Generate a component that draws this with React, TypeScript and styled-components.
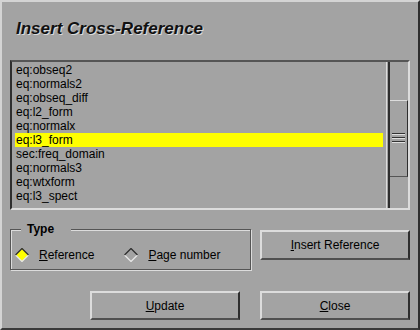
import styled, { createGlobalStyle } from 'styled-components';

const GlobalStyle = createGlobalStyle`
  html, body {
    margin: 0;
    padding: 0;
    background: #a3a3a3;
  }
  body {
    font-family: "Liberation Sans", Arial, sans-serif;
  }
`;

const labels = [
  'eq:obseq2',
  'eq:normals2',
  'eq:obseq_diff',
  'eq:l2_form',
  'eq:normalx',
  'eq:l3_form',
  'sec:freq_domain',
  'eq:normals3',
  'eq:wtxform',
  'eq:l3_spect',
];

const Diamond = ({ checked }: { checked: boolean }) => (
  <svg width="14" height="14" viewBox="0 0 14 14">
    <polygon points="7,0.5 13.5,7 7,13.5 0.5,7" fill={checked ? '#ffff00' : '#a3a3a3'} />
    <polyline points="0.5,7 7,13.5 13.5,7" fill="none" stroke="#e6e6e6" strokeWidth="1.3" />
    <polyline points="0.5,7 7,0.5 13.5,7" fill="none" stroke="#2e2e2e" strokeWidth="1.3" />
  </svg>
);

export default function App() {
  return (
    <>
      <GlobalStyle />
      <Dialog>
        <Header>
          <Title>Insert Cross-Reference</Title>
        </Header>

        <ListFrame>
          <ListArea>
            {labels.map((label, i) => (
              <Row key={label} $selected={i === 5}>
                {label}
              </Row>
            ))}
          </ListArea>
          <Scrollbar>
            <Thumb>
              <GripLine />
              <GripLine />
              <GripLine />
            </Thumb>
          </Scrollbar>
        </ListFrame>

        <MiddleRow>
          <GroupBox>
            <Legend>Type</Legend>
            <RadioRow>
              <RadioOption>
                <Diamond checked />
                <RadioText>
                  <u>R</u>eference
                </RadioText>
              </RadioOption>
              <RadioOption>
                <Diamond checked={false} />
                <RadioText>
                  <u>P</u>age number
                </RadioText>
              </RadioOption>
            </RadioRow>
          </GroupBox>
          <Button $top={1} $height={30}>
            <u>I</u>nsert Reference
          </Button>
        </MiddleRow>

        <ButtonRow>
          <Button>
            <u>U</u>pdate
          </Button>
          <Button>
            <u>C</u>lose
          </Button>
        </ButtonRow>
      </Dialog>
    </>
  );
}

const Dialog = styled.div`
  width: 420px;
  height: 330px;
  box-sizing: border-box;
  background: #a3a3a3;
  border-style: solid;
  border-width: 2px;
  border-color: #d4d4d4 #2e2e2e #3a3a3a #d4d4d4;
  display: flex;
  flex-direction: column;
  color: #000;
`;

const Header = styled.div`
  height: 58px;
  box-sizing: border-box;
  padding: 17px 0 0 14px;
`;

const Title = styled.h1`
  margin: 0;
  font-size: 17px;
  line-height: 20px;
  font-weight: bold;
  font-style: italic;
  color: #111;
  text-shadow: 1px 1px 0 #dcdcdc;
`;

const ListFrame = styled.div`
  height: 150px;
  margin: 0 8px;
  box-sizing: border-box;
  border-style: solid;
  border-width: 2px;
  border-color: #555 #dcdcdc #dcdcdc #2e2e2e;
  display: flex;
`;

const ListArea = styled.div`
  flex: 1;
  padding: 1px 3px 0;
  border-right: 1px solid #dcdcdc;
  margin-right: 1px;
`;

const Row = styled.div<{ $selected: boolean }>`
  height: 14px;
  line-height: 14px;
  font-size: 12px;
  padding-left: 1px;
  white-space: nowrap;
  background: ${({ $selected }) => ($selected ? '#ffff00' : 'transparent')};
`;

const Scrollbar = styled.div`
  width: 20px;
  box-sizing: border-box;
  border-left: 2px solid #2e2e2e;
`;

const Thumb = styled.div`
  margin-top: 38px;
  height: 77px;
  box-sizing: border-box;
  border-top: 1px solid #dcdcdc;
  border-right: 1px solid #2e2e2e;
  border-bottom: 1px solid #555;
  padding: 32px 0 0 2px;
  display: flex;
  flex-direction: column;
  gap: 2px;
`;

const GripLine = styled.div`
  width: 13px;
  border-top: 1px solid #333;
  border-bottom: 1px solid #e0e0e0;
`;

const MiddleRow = styled.div`
  margin: 19px 8px 0;
  display: flex;
  align-items: flex-start;
`;

const GroupBox = styled.div`
  position: relative;
  width: 241px;
  height: 41px;
  box-sizing: border-box;
  border: 1px solid #555;
  box-shadow: 1px 1px 0 #dcdcdc, inset 1px 1px 0 #dcdcdc;
  padding: 17px 0 0 4px;
  margin-right: 9px;
`;

const Legend = styled.div`
  position: absolute;
  top: -8px;
  left: 10px;
  padding: 0 17px 0 6px;
  background: #a3a3a3;
  font-size: 12px;
  line-height: 14px;
  font-weight: bold;
`;

const RadioRow = styled.div`
  display: flex;
  gap: 30px;
`;

const RadioOption = styled.div`
  display: flex;
  align-items: center;
  gap: 10px;

  svg {
    display: block;
  }
`;

const RadioText = styled.span`
  font-size: 12px;
  line-height: 14px;
  padding-top: 1px;
`;

const ButtonRow = styled.div`
  margin: 21px 8px 0;
  display: flex;
  justify-content: flex-end;
  gap: 20px;
`;

const Button = styled.button<{ $top?: number; $height?: number }>`
  width: 150px;
  height: ${({ $height }) => $height ?? 29}px;
  margin-top: ${({ $top }) => $top ?? 0}px;
  box-sizing: border-box;
  padding: 0;
  background: #a3a3a3;
  border-style: solid;
  border-width: 2px;
  border-color: #dcdcdc #2e2e2e #505050 #dcdcdc;
  font-family: "Liberation Sans", Arial, sans-serif;
  font-size: 12px;
  color: #000;
  cursor: pointer;
`;
